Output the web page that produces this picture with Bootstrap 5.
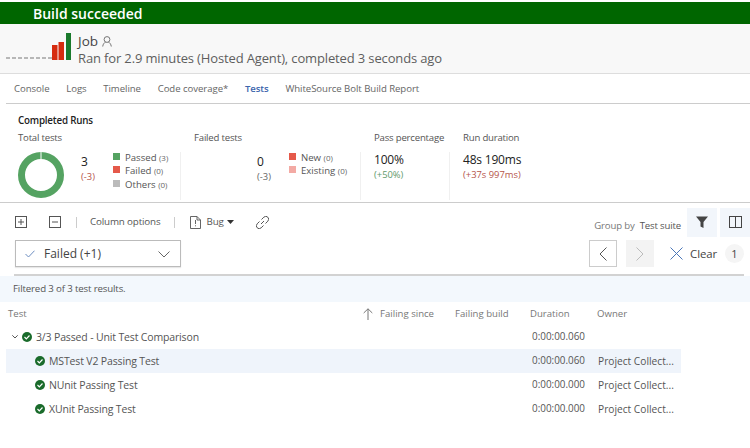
<!DOCTYPE html>
<html lang="en"><head><meta charset="utf-8"><title>Build</title>
<link href="https://cdn.jsdelivr.net/npm/bootstrap@5.3.0/dist/css/bootstrap.min.css" rel="stylesheet">
<style>
html,body{height:100%;overflow:hidden}
body{width:750px;height:448px;background:#fff;font-family:"Open Sans","Noto Sans",sans-serif;font-size:11px;color:#444;line-height:1.2;padding-top:2px}
svg{display:block;flex:none}
.banner{height:22px;background:#006600;color:#fff;font-weight:600;font-size:14px;padding:2px 0 0 33px}
.head{height:50px;background:#f8f8f8;border-bottom:1px solid #ddd;padding-left:6px}
.head svg.chart{margin-top:-6px}
.who{margin-left:6px;padding-top:3px}
.job{font-size:13.5px;color:#444;margin-bottom:2px}
.ran{font-size:13px;letter-spacing:-.14px;color:#5e5e5e}
.tabs{height:30px;margin-left:6px;border-bottom:1px solid #ccc;padding-left:8px;gap:16.7px;font-size:9.6px;letter-spacing:-.05px;color:#666}
.tabs .active{color:#3d66ad;font-weight:600}
.summary{height:99px;border-bottom:1px solid #ccc;padding:11px 0 0 18px}
.title{font-weight:600;color:#222;font-size:9.8px;letter-spacing:-.2px;margin-bottom:5px}
.lab{color:#555;font-size:9.6px;letter-spacing:-.2px;height:18px}
.stat{border-right:1px solid #f0f0f0;height:48px;margin-top:2px}
.nums{margin-top:2px}
.num{font-size:12px;letter-spacing:-.2px;color:#222;font-weight:500;line-height:16px}
.delta{font-size:9.4px;line-height:14px}
.red{color:#b5544a}.green{color:#5f9a6c}.gray{color:#666}
.legend{font-size:9.6px;line-height:13.4px;color:#555}
.legend small{font-size:8px;color:#666}
.sw{display:inline-block;width:7px;height:7px;margin-right:5px;vertical-align:1px}
.toolbar{height:34px;padding:4px 0 0 15px;font-size:9.8px;letter-spacing:-.15px;color:#555}
.sep{width:1px;height:11px;background:#ccc}
.ibtn{width:30px;height:29px;background:#f2f6fb}
.group{font-size:9.6px;margin-top:8px}
.filters{height:27px;padding-left:15px;margin-top:3px;padding-right:6px}
.dd{width:166px;height:27px;border:1px solid #bbb;padding:1px 10px 0 9px;font-size:12px;color:#444;box-shadow:0 1px 1px #e8e8e8}
.nbtn{width:28px;height:27px;border:1px solid #ccc;background:#fff}
.nbtn.off{background:#f3f3f3;border-color:#f3f3f3}
.clear{font-size:11.4px;letter-spacing:-.1px;color:#444}
.badge1{width:19px;height:19px;border-radius:50%;background:#f5f5f5;font-size:11px;color:#444}
.rule{height:2px;margin:7px 6px 0 14px;background:#d2d2d2}
.band{height:26px;background:#f3f8fd;padding-left:13px;font-size:9.7px;letter-spacing:-.15px;color:#555}
.thead{height:23px;font-size:9.6px;color:#777;padding-left:8px}
.trow{height:24px;width:675px;margin-left:6px;font-size:10.5px;letter-spacing:-.15px;color:#555}
.trow.hl{background:#eff4fb}
.c-name{width:526px}
.c-dur{width:66px;font-size:9.9px;letter-spacing:0}
.c-own{font-size:10.2px;letter-spacing:0}
</style></head><body>
<div class="banner d-flex align-items-center">Build succeeded</div>
<div class="head d-flex align-items-center">
<svg class="chart" width="66" height="30" viewBox="0 0 66 30"><path d="M0 27H46" stroke="#777" stroke-width="1.200" stroke-dasharray="4 2"/><rect x="46" y="14" width="5.500" height="15" fill="#d62b0f"/><rect x="52.500" y="11" width="5.500" height="18" fill="#d62b0f"/><rect x="60" y="2" width="5" height="27" fill="#1a7a2c"/></svg>
<div class="who">
<div class="job d-flex align-items-center gap-1">Job <svg width="10" height="11" viewBox="0 0 10 11" fill="none" stroke="#666" stroke-width=".9"><circle cx="5" cy="3.500" r="2.900"/><path d="M.7 10.500C1 8 2.500 6.500 3.500 6.200M9.300 10.500C9 8 7.500 6.500 6.500 6.200"/></svg></div>
<div class="ran">Ran for 2.9 minutes (Hosted Agent), completed 3 seconds ago</div>
</div></div>
<nav class="tabs d-flex align-items-center"><span>Console</span><span>Logs</span><span>Timeline</span><span>Code coverage*</span><span class="active">Tests</span><span>WhiteSource Bolt Build Report</span></nav>
<section class="summary">
<div class="title">Completed Runs</div>
<div class="d-flex">
<div style="width:176px"><div class="lab">Total tests</div>
<div class="stat d-flex" style="width:163px">
<svg width="46" height="46" viewBox="0 0 46 46"><circle cx="23" cy="23" r="19.500" fill="none" stroke="#55a362" stroke-width="7"/><path d="M23 0V7" stroke="#fff"/></svg>
<div class="nums" style="margin-left:17px;width:32px"><div class="num">3</div><div class="delta red">(-3)</div></div>
<div class="legend" style="margin-top:-1px"><div><i class="sw" style="background:#55a362"></i>Passed <small>(3)</small></div><div><i class="sw" style="background:#e5594a"></i>Failed <small>(0)</small></div><div><i class="sw" style="background:#bbb"></i>Others <small>(0)</small></div></div>
</div></div>
<div style="width:180px"><div class="lab">Failed tests</div>
<div class="stat d-flex" style="width:167px">
<div class="nums" style="margin-left:63px;width:32px"><div class="num">0</div><div class="delta gray">(-3)</div></div>
<div class="legend" style="margin-top:-1px"><div><i class="sw" style="background:#e5594a"></i>New <small>(0)</small></div><div><i class="sw" style="background:#f3aaa4"></i>Existing <small>(0)</small></div></div>
</div></div>
<div style="width:89px"><div class="lab">Pass percentage</div>
<div class="stat" style="width:76px"><div class="nums"><div class="num">100%</div><div class="delta green">(+50%)</div></div></div></div>
<div><div class="lab">Run duration</div><div class="stat border-0"><div class="nums"><div class="num">48s 190ms</div><div class="delta red">(+37s 997ms)</div></div></div></div>
</div></section>
<div class="toolbar d-flex align-items-center">
<svg width="12" height="12" viewBox="0 0 12 12" fill="none" stroke="#555"><rect x=".5" y=".5" width="11" height="11"/><path d="M3 6H9M6 3V9"/></svg>
<svg style="margin-left:22px" width="12" height="12" viewBox="0 0 12 12" fill="none" stroke="#555"><rect x=".5" y=".5" width="11" height="11"/><path d="M3 6H9"/></svg>
<i class="sep" style="margin-left:15px"></i><span style="margin-left:13px">Column options</span><i class="sep" style="margin-left:13px"></i>
<svg style="margin-left:15px" width="11" height="13" viewBox="0 0 11 13" fill="none" stroke="#555" stroke-width=".9"><path d="M.5.500H7L10.500 4V12.500H.5ZM7 .5V4H10.500M5.500 4V8M5.500 9.300V10.300"/></svg>
<span style="margin-left:6px">Bug</span><svg style="margin-left:3px" width="7" height="4" viewBox="0 0 7 4"><path d="M0 0H7L3.500 4Z" fill="#333"/></svg>
<svg style="margin-left:22px" width="13" height="13" viewBox="0 0 13 13" fill="none" stroke="#555"><path d="M5 8 8 5M5.500 3.500 7.800 1.200A2.300 2.300 0 0 1 11.800 5.200L9.500 7.500M7.500 9.500 5.200 11.800A2.300 2.300 0 0 1 1.200 7.800L3.500 5.500"/></svg>
<div class="ms-auto d-flex align-items-center"><span class="group" style="color:#777;margin-right:5px">Group by</span><span class="group" style="color:#555;margin-right:6px">Test suite</span>
<div class="ibtn d-flex align-items-center justify-content-center"><svg width="12" height="12" viewBox="0 0 12 12"><path d="M0 .5H12L7.500 6V12L4.500 10.500V6Z" fill="#444"/></svg></div>
<div class="ibtn d-flex align-items-center justify-content-center" style="margin-left:3px"><svg width="13" height="12" viewBox="0 0 13 12" fill="none" stroke="#444"><rect x=".5" y=".5" width="12" height="11"/><path d="M6.500 .5V11.500"/></svg></div></div>
</div>
<div class="filters d-flex align-items-center">
<div class="dd d-flex align-items-center"><svg width="10" height="8" viewBox="0 0 10 8" fill="none" stroke="#6d8dc0"><path d="M.5 4 3.500 7 9.500 .7"/></svg><span style="margin-left:9px">Failed (+1)</span><svg class="ms-auto" width="12" height="7" viewBox="0 0 12 7" fill="none" stroke="#666"><path d="M.5.500 6 6 11.500 .5"/></svg></div>
<div class="nbtn d-flex align-items-center justify-content-center ms-auto"><svg width="8" height="14" viewBox="0 0 8 14" fill="none" stroke="#555"><path d="M7.500.5 1 7 7.500 13.500"/></svg></div>
<div class="nbtn off d-flex align-items-center justify-content-center" style="margin-left:9px"><svg width="8" height="14" viewBox="0 0 8 14" fill="none" stroke="#bbb"><path d="M.5.500 7 7 .5 13.500"/></svg></div>
<svg style="margin-left:16px" width="13" height="13" viewBox="0 0 13 13" fill="none" stroke="#4a76b8"><path d="M.5.500 12.500 12.500M12.500 .5 .5 12.500"/></svg>
<span class="clear" style="margin-left:7px">Clear</span>
<div class="badge1 d-flex align-items-center justify-content-center" style="margin-left:8px">1</div>
</div>
<div class="rule"></div>
<div class="band d-flex align-items-center">Filtered 3 of 3 test results.</div>
<div class="thead d-flex align-items-center"><span style="width:355px">Test</span>
<svg width="10" height="12" viewBox="0 0 10 12" fill="none" stroke="#777"><path d="M5 12V.8M.7 5 5 .8 9.300 5"/></svg>
<span style="margin-left:7px;width:75px">Failing since</span><span style="width:75px">Failing build</span><span style="width:67px">Duration</span><span>Owner</span></div>
<div class="trow d-flex align-items-center"><div class="c-name d-flex align-items-center" style="padding-left:6px"><svg width="6" height="4" viewBox="0 0 6 4" fill="none" stroke="#555"><path d="M.3.300 3 3 5.700 .3"/></svg><svg style="margin-left:4px" width="10" height="10" viewBox="0 0 10 10"><circle cx="5" cy="5" r="5" fill="#1a6b2b"/><path d="M2.500 5 4.300 6.800 7.500 3.500" fill="none" stroke="#fff" stroke-width="1.200"/></svg><span style="margin-left:4px">3/3 Passed - Unit Test Comparison</span></div><div class="c-dur">0:00:00.060</div></div>
<div class="trow hl d-flex align-items-center"><div class="c-name d-flex align-items-center" style="padding-left:29px"><svg width="10" height="10" viewBox="0 0 10 10"><circle cx="5" cy="5" r="5" fill="#1a6b2b"/><path d="M2.500 5 4.300 6.800 7.500 3.500" fill="none" stroke="#fff" stroke-width="1.200"/></svg><span style="margin-left:4px">MSTest V2 Passing Test</span></div><div class="c-dur">0:00:00.060</div><div class="c-own">Project Collect...</div></div>
<div class="trow d-flex align-items-center"><div class="c-name d-flex align-items-center" style="padding-left:29px"><svg width="10" height="10" viewBox="0 0 10 10"><circle cx="5" cy="5" r="5" fill="#1a6b2b"/><path d="M2.500 5 4.300 6.800 7.500 3.500" fill="none" stroke="#fff" stroke-width="1.200"/></svg><span style="margin-left:4px">NUnit Passing Test</span></div><div class="c-dur">0:00:00.000</div><div class="c-own">Project Collect...</div></div>
<div class="trow d-flex align-items-center"><div class="c-name d-flex align-items-center" style="padding-left:29px"><svg width="10" height="10" viewBox="0 0 10 10"><circle cx="5" cy="5" r="5" fill="#1a6b2b"/><path d="M2.500 5 4.300 6.800 7.500 3.500" fill="none" stroke="#fff" stroke-width="1.200"/></svg><span style="margin-left:4px">XUnit Passing Test</span></div><div class="c-dur">0:00:00.000</div><div class="c-own">Project Collect...</div></div>
<script src="https://cdn.jsdelivr.net/npm/bootstrap@5.3.0/dist/js/bootstrap.bundle.min.js"></script>
</body></html>
